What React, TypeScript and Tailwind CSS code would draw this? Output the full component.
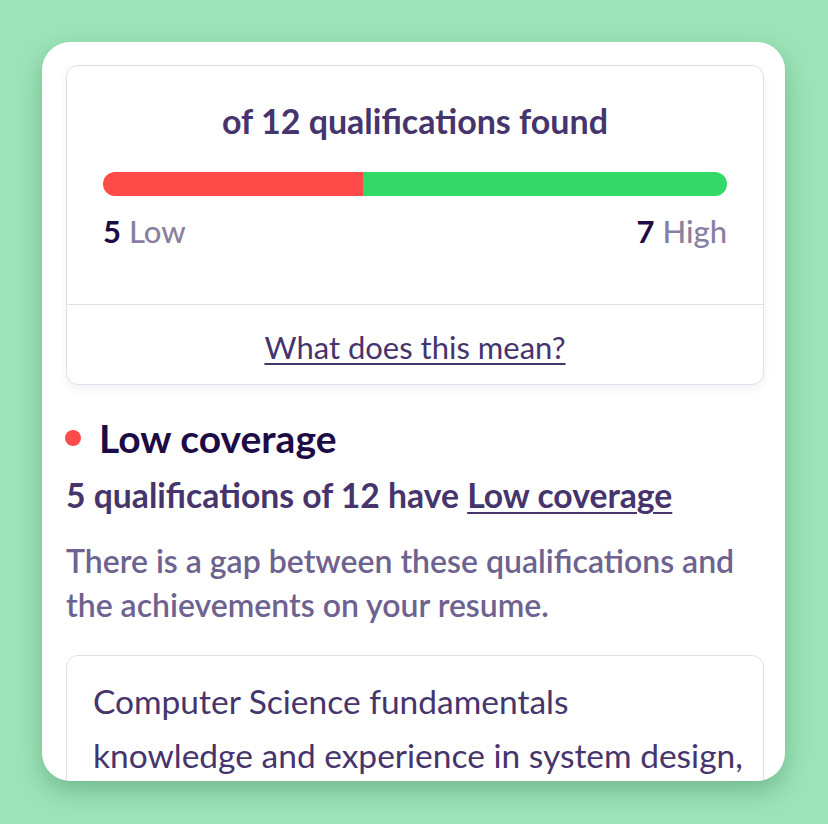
export default function App() {
  const low = 5
  const high = 7
  const total = low + high

  return (
    <div
      className="h-[824px] w-full overflow-hidden bg-[#9de3b8] pl-[42px] pt-[42px]"
      style={{ fontFamily: 'Lato, "Noto Sans", sans-serif' }}
    >
      <div className="h-[739px] w-[743px] overflow-hidden rounded-[28px] bg-white pl-6 pr-[21px] pt-[23px] shadow-[0_10px_24px_rgba(40,110,70,0.35)]">
        {/* Summary card */}
        <div className="rounded-xl border border-[#e1dfe9] bg-white shadow-[0_4px_10px_rgba(30,20,70,0.06)]">
          <div className="px-9 pb-[54px] pt-[35px]">
            <h2 className="text-center text-[34px] font-bold leading-[40px] text-[#46346c]">
              of {total} qualifications found
            </h2>
            <div className="mt-[31px] flex h-6 overflow-hidden rounded-full">
              <div className="bg-[#ff4a4a]" style={{ width: `${(low / total) * 100}%` }} />
              <div className="flex-1 bg-[#33d966]" />
            </div>
            <div className="mt-4 flex justify-between text-[31px] leading-[38px]">
              <span>
                <span className="font-bold text-[#1c0b45]">{low}</span>{' '}
                <span className="font-medium text-[#8a7fa3]">Low</span>
              </span>
              <span>
                <span className="font-bold text-[#1c0b45]">{high}</span>{' '}
                <span className="font-medium text-[#8a7fa3]">High</span>
              </span>
            </div>
          </div>
          <div className="border-t border-[#e1dfe9] pb-[18px] pt-[23px] text-center">
            <a href="#" className="text-[31px] leading-[38px] text-[#46346c] underline decoration-2 underline-offset-[4px]">
              What does this mean?
            </a>
          </div>
        </div>

        {/* Low coverage section */}
        <div className="mt-[30px] flex items-center gap-[18px]">
          <span className="ml-[-1px] h-4 w-4 rounded-full bg-[#ff4a4a]" />
          <h3 className="text-[39px] font-bold leading-[46px] text-[#1c0b45]">Low coverage</h3>
        </div>
        <p className="mt-[14px] text-[33.7px] font-bold leading-[40px] text-[#46346c]">
          {low} qualifications of {total} have{' '}
          <a href="#" className="underline decoration-2 underline-offset-[4px]">
            Low coverage
          </a>
        </p>
        <p className="mt-6 text-[32px] font-semibold leading-[44px] text-[#6e6290]">
          There is a gap between these qualifications and the achievements on your resume.
        </p>

        <div className="mt-7 rounded-xl border border-[#e1dfe9] pl-[26px] pr-3 pt-[18px]">
          <p className="text-[33.5px] leading-[54px] text-[#46346c]">
            Computer Science fundamentals
            <br />
            knowledge and experience in system design,
            <br />
            distributed systems and scalable architectures
          </p>
        </div>
      </div>
    </div>
  )
}
